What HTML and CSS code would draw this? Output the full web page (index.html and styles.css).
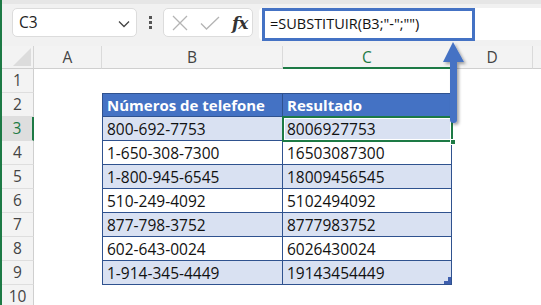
FILE: index.html
```html
<!DOCTYPE html>
<html>
<head>
<meta charset="utf-8">
<link rel="stylesheet" href="styles.css">
</head>
<body>
<div class="app">
  <div class="toolbar">
    <div class="namebox">
      <span class="nb-text">C3</span>
      <svg class="chev" width="12" height="8" viewBox="0 0 12 8"><path d="M1 1.5 L6 6.5 L11 1.5" fill="none" stroke="#444" stroke-width="1.3"/></svg>
    </div>
    <div class="dots"><i></i><i></i><i></i></div>
    <div class="fbtns">
      <svg width="16" height="16" viewBox="0 0 16 16"><path d="M1 1 L15 15 M15 1 L1 15" stroke="#b4b4b4" stroke-width="1.3" fill="none"/></svg>
      <svg width="20" height="14" viewBox="0 0 20 14"><path d="M1 7.5 L6.5 13 L19 1" stroke="#b4b4b4" stroke-width="1.3" fill="none"/></svg>
      <span class="fx">fx</span>
    </div>
    <div class="fbar">
      <div class="formula">=SUBSTITUIR(B3;"-";"")</div>
    </div>
  </div>
  <div class="sheet">
    <div class="corner"><svg width="18" height="18" viewBox="0 0 18 18"><polygon points="18,0 18,18 0,18" fill="#dcdcdc"/></svg></div>
    <div class="ch">A</div><div class="ch">B</div><div class="ch sel">C</div><div class="ch">D</div><div class="ch last"></div>

    <div class="rh">1</div><div class="c"></div><div class="c"></div><div class="c"></div><div class="c"></div><div class="c"></div>

    <div class="rh">2</div><div class="c"></div><div class="t th tl tt">Números de telefone</div><div class="t th tt">Resultado</div><div class="c"></div><div class="c"></div>

    <div class="rh sel">3</div><div class="c"></div><div class="t band tl">800-692-7753</div><div class="t band">8006927753</div><div class="c"></div><div class="c"></div>

    <div class="rh">4</div><div class="c"></div><div class="t tl">1-650-308-7300</div><div class="t">16503087300</div><div class="c"></div><div class="c"></div>

    <div class="rh">5</div><div class="c"></div><div class="t band tl">1-800-945-6545</div><div class="t band">18009456545</div><div class="c"></div><div class="c"></div>

    <div class="rh">6</div><div class="c"></div><div class="t tl">510-249-4092</div><div class="t">5102494092</div><div class="c"></div><div class="c"></div>

    <div class="rh">7</div><div class="c"></div><div class="t band tl">877-798-3752</div><div class="t band">8777983752</div><div class="c"></div><div class="c"></div>

    <div class="rh">8</div><div class="c"></div><div class="t tl">602-643-0024</div><div class="t">6026430024</div><div class="c"></div><div class="c"></div>

    <div class="rh">9</div><div class="c"></div><div class="t band tl">1-914-345-4449</div><div class="t band last-cell">19143454449<svg class="resize" width="7" height="7" viewBox="0 0 7 7"><polygon points="7,0 7,7 0,7 0,4 4,4 4,0" fill="#3f5fae"/></svg></div><div class="c"></div><div class="c"></div>

    <div class="rh">10</div><div class="c"></div><div class="c"></div><div class="c"></div><div class="c"></div><div class="c"></div>
  </div>

  <div class="selection"><span class="handle"></span></div>

  <svg class="arrow" width="34" height="92" viewBox="0 0 34 92">
    <defs>
      <filter id="sh" x="-50%" y="-20%" width="200%" height="140%">
        <feDropShadow dx="2" dy="2" stdDeviation="1.5" flood-color="#000" flood-opacity="0.35"/>
      </filter>
    </defs>
    <path d="M13 2 L3 22 L10 22 L10 80 Q10 83 13.5 83 Q17 83 17 80 L17 22 L24 22 Z" fill="#4472c4" filter="url(#sh)"/>
  </svg>
</div>
</body>
</html>
```

FILE: styles.css
```css
* { box-sizing: border-box; }
html, body { margin: 0; padding: 0; }
body {
  width: 541px;
  height: 305px;
  overflow: hidden;
  background: #ffffff;
  font-family: "Open Sans", "Noto Sans", sans-serif;
}
.app {
  position: relative;
  width: 541px;
  height: 305px;
  border-left: 2px solid #1d7a45;
  overflow: hidden;
}
.toolbar {
  height: 46px;
  background: #f1f1f1;
  border-top: 4px solid #e6e6e6;
  display: flex;
  align-items: flex-start;
  padding-top: 4px;
  padding-left: 10px;
}
.namebox {
  width: 125px;
  height: 29px;
  background: #fff;
  border: 1px solid #dcdcdc;
  border-radius: 5px;
  display: flex;
  align-items: center;
  justify-content: space-between;
  padding: 0 6px 0 6px;
}
.nb-text {
  font-size: 15.5px;
  color: #222;
  line-height: 1;
}
.chev { margin-top: 2px; }
.dots {
  width: 26px;
  height: 29px;
  display: flex;
  flex-direction: column;
  align-items: center;
  justify-content: center;
  gap: 2px;
}
.dots i {
  display: block;
  width: 3px;
  height: 3px;
  background: #555;
}
.fbtns {
  width: 90px;
  height: 29px;
  background: #fff;
  border: 1px solid #dcdcdc;
  border-radius: 5px;
  display: flex;
  align-items: center;
  padding-left: 8px;
  gap: 12px;
}
.fx {
  font-family: "DejaVu Serif", "Liberation Serif", serif;
  font-style: italic;
  font-weight: bold;
  font-size: 17px;
  color: #333;
  letter-spacing: -1px;
}
.fbar {
  flex: 1;
  height: 32px;
  margin-left: 6px;
  background: #fff;
  border-radius: 4px 0 0 4px;
  padding-left: 3px;
}
.formula {
  width: 213px;
  height: 33px;
  border: 3px solid #4472c4;
  font-size: 14.5px;
  color: #111;
  padding-left: 5px;
  line-height: 26px;
  white-space: nowrap;
}
.sheet {
  display: grid;
  grid-template-columns: 32px 68px 181px 169px 81px 1fr;
  grid-template-rows: 23px repeat(10, 24px);
}
.corner {
  background: #f3f3f3;
  border-right: 1px solid #d4d4d4;
  border-bottom: 1px solid #cfcfcf;
  display: flex;
  align-items: flex-end;
  justify-content: flex-end;
  padding: 0 2px 2px 0;
}
.ch {
  background: #f3f3f3;
  border-right: 1px solid #dadada;
  border-bottom: 1px solid #cfcfcf;
  font-size: 15.5px;
  color: #444;
  text-align: center;
  line-height: 22px;
}
.ch.sel {
  color: #1d7a45;
  border-bottom: 2px solid #1d7a45;
}
.ch.last { border-right: none; }
.rh {
  background: #f3f3f3;
  border-right: 1px solid #cfcfcf;
  border-bottom: 1px solid #dedede;
  font-size: 15.5px;
  color: #444;
  text-align: center;
  line-height: 23px;
}
.rh.sel {
  background: #dedede;
  color: #1d7a45;
  border-right: 2px solid #1d7a45;
}
.c { background: #fff; }
.t {
  position: relative;
  background: #fff;
  border-right: 1px solid #2f528f;
  border-bottom: 1px solid #2f528f;
  font-size: 15.5px;
  color: #111;
  padding-left: 4px;
  line-height: 24px;
  white-space: nowrap;
}
.t.tl { border-left: 1px solid #2f528f; }
.t.tt { border-top: 1px solid #2f528f; line-height: 22px; }
.t.band { background: #d9e1f2; }
.t.th {
  background: #4472c4;
  color: #fff;
  font-weight: bold;
  font-size: 15px;
}
.resize {
  position: absolute;
  right: 0;
  bottom: 0;
}
.selection {
  position: absolute;
  left: 280px;
  top: 116px;
  width: 171px;
  height: 26px;
  border: 2px solid #1d7a45;
  box-shadow: inset 0 0 0 1px #fff;
}
.handle {
  position: absolute;
  right: -5px;
  bottom: -5px;
  width: 6px;
  height: 6px;
  background: #1d7a45;
  border: 1px solid #fff;
}
.arrow {
  position: absolute;
  left: 438px;
  top: 40px;
}
```
